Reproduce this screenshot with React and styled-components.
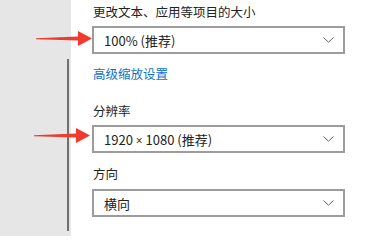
import React from "react";
import styled, { createGlobalStyle } from "styled-components";

const Global = createGlobalStyle`
  html, body { margin: 0; padding: 0; background: #fff; }
  body { font-family: "Noto Sans CJK SC", "Noto Sans", sans-serif; }
`;

const Page = styled.div`
  position: relative;
  display: flex;
  width: 371px;
  height: 236px;
  overflow: hidden;
  background: #fff;
`;

const Side = styled.div`
  width: 71px;
  flex: none;
  background: #e6e6e6;
  display: flex;
  flex-direction: column;
  align-items: flex-start;
`;

const ScrollLine = styled.div`
  margin-top: 59px;
  margin-left: 67px;
  width: 2px;
  height: 172px;
  background: #707070;
`;

const Content = styled.div`
  padding-left: 21px;
  display: flex;
  flex-direction: column;
  align-items: flex-start;
`;

const Label = styled.div`
  margin-top: ${(p) => p.$mt}px;
  padding-left: 1px;
  font-size: 12.5px;
  line-height: 20px;
  color: #222;
`;

const Link = styled(Label)`
  color: #0a6fc9;
`;

const Select = styled.div`
  margin-top: ${(p) => p.$mt}px;
  box-sizing: border-box;
  width: 253px;
  height: 28px;
  border: 2px solid #9c9c9c;
  display: flex;
  align-items: center;
  justify-content: space-between;
  padding: 0 9px 0 10px;
  font-size: 13px;
  color: #222;
`;

const Times = styled.span`
  font-family: "Noto Sans", sans-serif;
  font-size: 12px;
  color: #444;
`;

const Chevron = () => (
  <svg width="11" height="6" viewBox="0 0 11 6">
    <path d="M0.5 0.5 L5.5 5.2 L10.5 0.5" fill="none" stroke="#666" strokeWidth="1" />
  </svg>
);

const ArrowSvg = styled.svg`
  position: absolute;
  left: ${(p) => p.$x}px;
  top: ${(p) => p.$y}px;
`;

const Arrow = ({ x, y }) => (
  <ArrowSvg $x={x} $y={y} width="58" height="16" viewBox="0 0 58 16">
    <polygon points="0,7.2 42,5.4 42,0 56,7.5 42,15 42,9.6 0,8.3" fill="#f03a2e" />
  </ArrowSvg>
);

export default function App() {
  return (
    <Page>
      <Global />
      <Side>
        <ScrollLine />
      </Side>
      <Content>
        <Label $mt={2}>更改文本、应用等项目的大小</Label>
        <Select $mt={4}>
          <span>100% (推荐)</span>
          <Chevron />
        </Select>
        <Link $mt={10}>高级缩放设置</Link>
        <Label $mt={17}>分辨率</Label>
        <Select $mt={4}>
          <span>1920 <Times>×</Times> 1080 (推荐)</span>
          <Chevron />
        </Select>
        <Label $mt={11}>方向</Label>
        <Select $mt={5}>
          <span>横向</span>
          <Chevron />
        </Select>
      </Content>
      <Arrow x={36} y={31} />
      <Arrow x={34} y={128} />
    </Page>
  );
}
